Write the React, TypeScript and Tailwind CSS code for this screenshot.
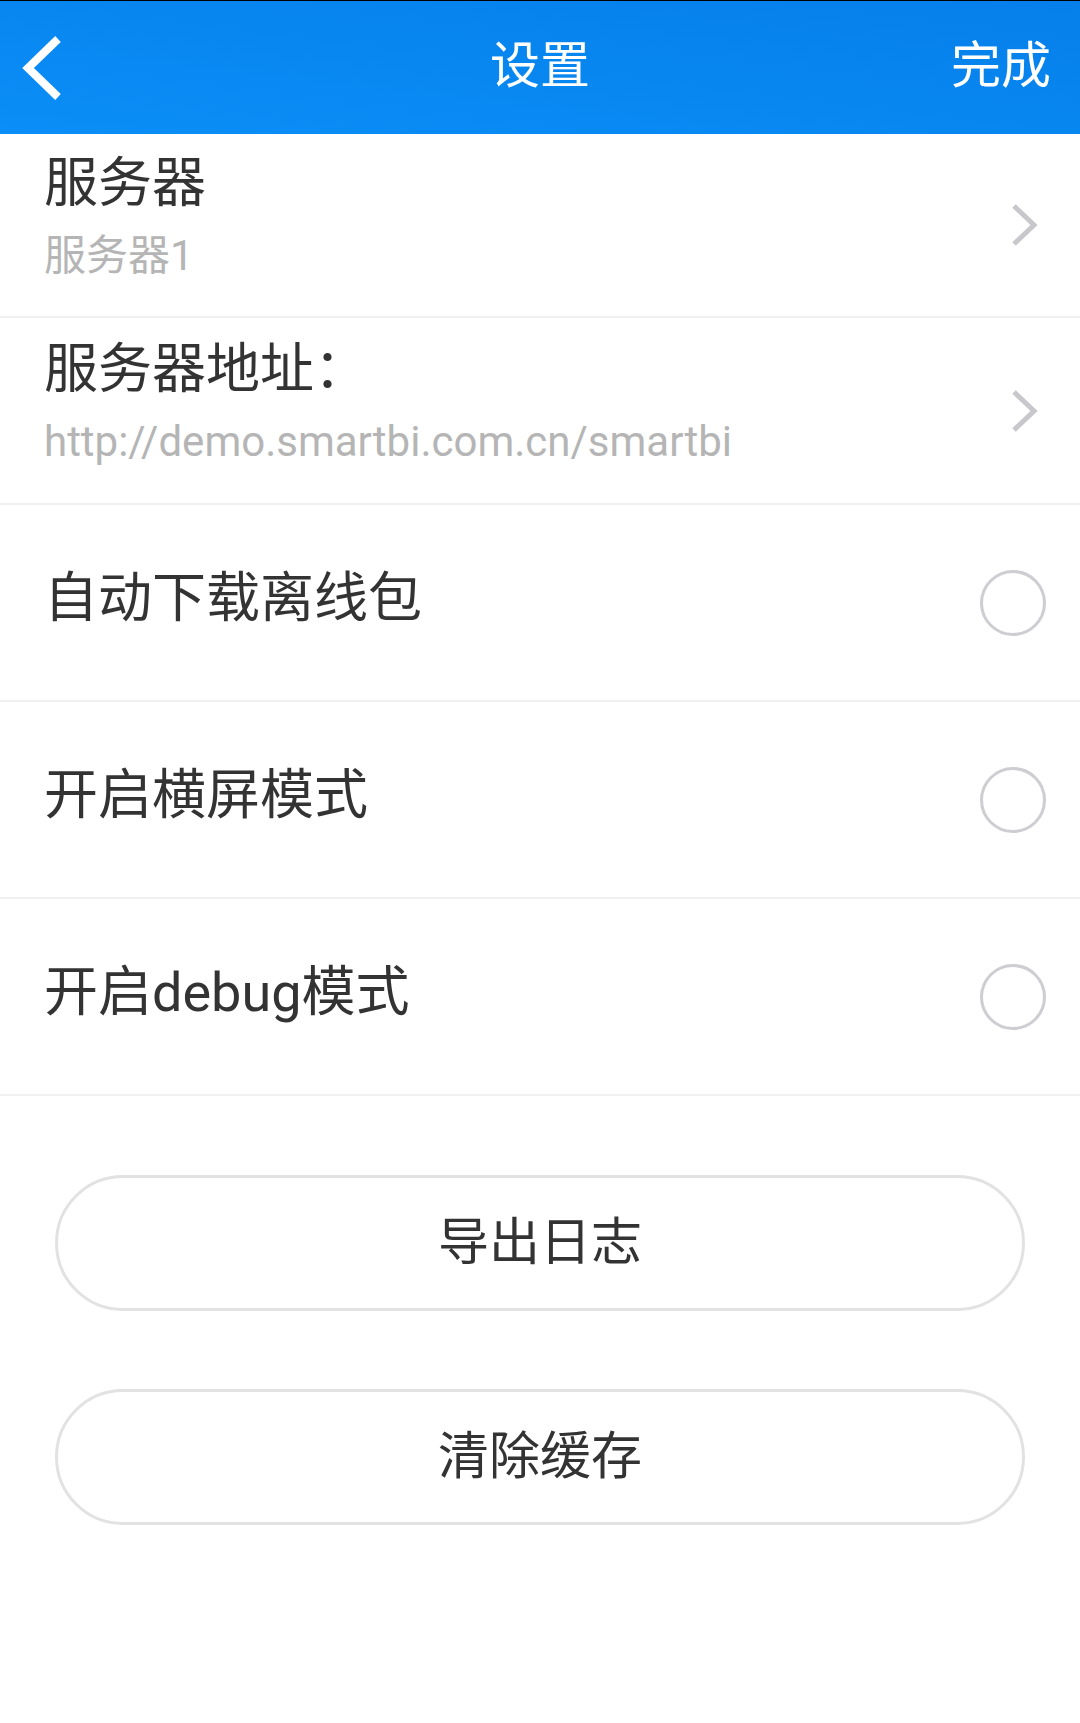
import { ReactNode } from "react";

const font = "font-['Roboto','Noto_Sans_CJK_SC',sans-serif]";

function Chevron() {
  return (
    <svg width="30" height="44" viewBox="0 0 30 44" className="shrink-0">
      <polyline points="4,3 24,22 4,41" fill="none" stroke="#c7c7cc" strokeWidth="5" />
    </svg>
  );
}

function Radio() {
  return <div className="w-[66px] h-[66px] rounded-full border-[3px] border-[#cdcdd2] shrink-0" />;
}

function LinkRow({ title, value, tall }: { title: string; value: string; tall?: boolean }) {
  return (
    <div
      className={`flex items-center justify-between ${tall ? "h-[187px]" : "h-[184px]"} pl-[44px] pr-[40px] border-b-[2px] border-[#f0f0f0]`}
    >
      <div className="flex flex-col mb-[16px]">
        <span className="text-[54px] leading-[54px] text-[#333333]">{title}</span>
        <span className="mt-[24px] text-[42px] leading-[42px] text-[#b5b5b5]">{value}</span>
      </div>
      <Chevron />
    </div>
  );
}

function ToggleRow({ children }: { children: ReactNode }) {
  return (
    <div className="flex items-center justify-between h-[197px] pl-[44px] pr-[34px] border-b-[2px] border-[#f0f0f0]">
      <span className="text-[54px] leading-[54px] text-[#333333] -mt-[8px]">{children}</span>
      <Radio />
    </div>
  );
}

function PillButton({ label }: { label: string }) {
  return (
    <button className="w-full h-[136px] rounded-full border-[3px] border-[#e2e2e2] bg-white text-[51px] text-[#333333] flex items-center justify-center">
      {label}
    </button>
  );
}

export default function App() {
  return (
    <div className={`w-[1080px] min-h-[1723px] bg-white ${font}`}>
      {/* Nav bar */}
      <header className="h-[134px] border-t border-black bg-gradient-to-tr from-[#0b8ef7] to-[#067fea] grid grid-cols-[1fr_auto_1fr] items-center">
        <div className="pl-[22px] flex items-center">
          <svg width="40" height="64" viewBox="0 0 40 64">
            <polyline points="36,3 6,32 36,61" fill="none" stroke="white" strokeWidth="8" />
          </svg>
        </div>
        <span className="text-[50px] leading-none text-white -mt-[4px]">设置</span>
        <span className="justify-self-end pr-[29px] text-[50px] leading-none text-white -mt-[4px]">完成</span>
      </header>

      {/* Settings list */}
      <div className="flex flex-col">
        <LinkRow title="服务器" value="服务器1" />
        <LinkRow title="服务器地址：" value="http://demo.smartbi.com.cn/smartbi" tall />
        <ToggleRow>自动下载离线包</ToggleRow>
        <ToggleRow>开启横屏模式</ToggleRow>
        <ToggleRow>开启debug模式</ToggleRow>
      </div>

      {/* Actions */}
      <div className="flex flex-col gap-[78px] px-[55px] pt-[79px]">
        <PillButton label="导出日志" />
        <PillButton label="清除缓存" />
      </div>
    </div>
  );
}
